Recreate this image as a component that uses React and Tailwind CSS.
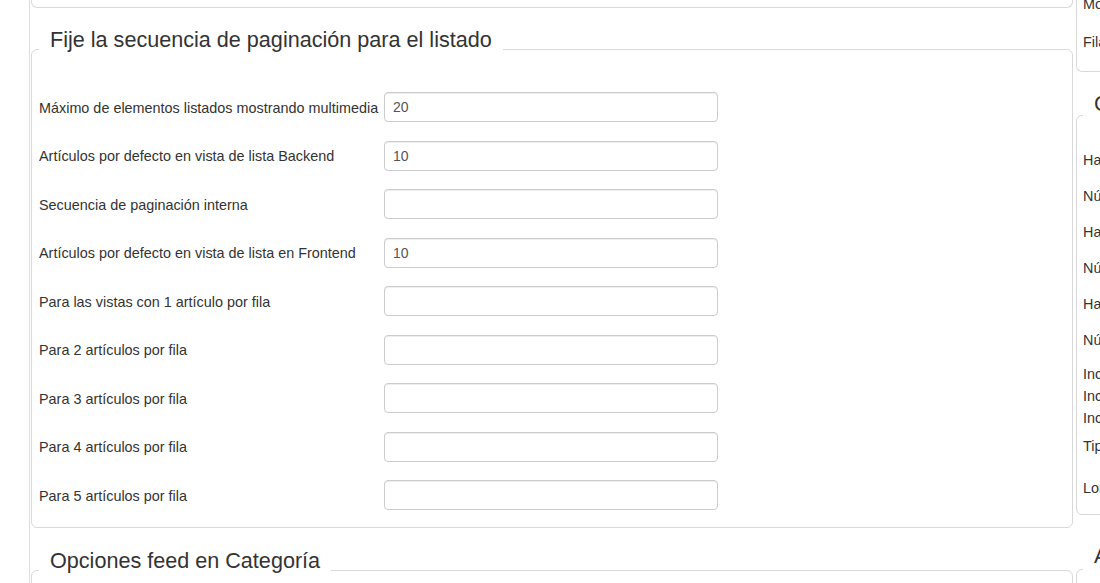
import React from "react";

const leftRows = [
  ["Máximo de elementos listados mostrando multimedia", "20"],
  ["Artículos por defecto en vista de lista Backend", "10"],
  ["Secuencia de paginación interna", ""],
  ["Artículos por defecto en vista de lista en Frontend", "10"],
  ["Para las vistas con 1 artículo por fila", ""],
  ["Para 2 artículos por fila", ""],
  ["Para 3 artículos por fila", ""],
  ["Para 4 artículos por fila", ""],
  ["Para 5 artículos por fila", ""],
];

function Legend({ children, pb = "pb-[19px]" }) {
  return (
    <legend
      className={`px-[11px] ${pb} text-[21.6px] leading-[24px] text-[#333] whitespace-nowrap`}
    >
      {children}
    </legend>
  );
}

function Row({ label, value }) {
  return (
    <div className="flex items-center">
      <div className="w-[345px] shrink-0 pt-[3px] text-[14.4px] text-[#333] whitespace-nowrap">
        {label}
      </div>
      <input
        readOnly
        value={value}
        className="w-[334px] h-[30px] border border-[#ccc] rounded-[4px] px-[8px] text-[14px] text-[#555] bg-white outline-none shadow-[inset_0_1px_1px_rgba(0,0,0,0.075)] font-['Liberation_Sans',sans-serif]"
      />
    </div>
  );
}

function RLabel({ h, mt = "", children }) {
  return (
    <div
      className={`${h} ${mt} shrink-0 flex items-center text-[14.4px] text-[#333] whitespace-nowrap`}
    >
      {children}
    </div>
  );
}

export default function App() {
  return (
    <div className="w-[1100px] h-[583px] overflow-hidden bg-white font-['Liberation_Sans',sans-serif]">
      <div className="flex h-full pl-[29px]">
        <div className="flex gap-[3px] border-l border-[#ddd] pl-[1px] shrink-0">
          {/* Left column */}
          <div className="w-[1042px] shrink-0 flex flex-col">
            <div className="h-[8px] shrink-0 border-x border-b border-[#d9d9d9] rounded-b-[6px]" />
            <fieldset className="mt-[20px] min-w-0 shrink-0 border border-[#d9d9d9] rounded-[6px] px-[7px] pt-[21px] pb-[17px]">
              <Legend>Fije la secuencia de paginación para el listado</Legend>
              <div className="flex flex-col gap-[18.5px]">
                {leftRows.map(([l, v]) => (
                  <Row key={l} label={l} value={v} />
                ))}
              </div>
            </fieldset>
            <fieldset className="mt-[21px] min-w-0 h-[200px] shrink-0 border border-[#d9d9d9] rounded-[6px] px-[7px]">
              <Legend>Opciones feed en Categoría</Legend>
            </fieldset>
          </div>

          {/* Right column */}
          <div className="w-[400px] shrink-0 flex flex-col">
            <div className="h-[72px] shrink-0 border-x border-b border-[#d9d9d9] rounded-b-[6px] flex flex-col justify-end pb-[9px] px-[6px]">
              <RLabel h="h-[38px]">Mostrar subcategorías</RLabel>
              <RLabel h="h-[38px]">Filas de subcategorías</RLabel>
            </div>
            <fieldset className="mt-[20px] min-w-0 shrink-0 border border-[#d9d9d9] rounded-[6px] px-[6px] pt-[5px] pb-[10px]">
              <Legend pb="pb-[22px]">Comentarios</Legend>
              <RLabel h="h-[36px]">Habilitar comentarios</RLabel>
              <RLabel h="h-[36px]">Número de comentarios</RLabel>
              <RLabel h="h-[36px]">Habilitar valoraciones</RLabel>
              <RLabel h="h-[36px]">Número de valoraciones</RLabel>
              <RLabel h="h-[36px]">Habilitar etiquetas</RLabel>
              <RLabel h="h-[36px]">Número de etiquetas</RLabel>
              <RLabel h="h-[22px]" mt="mt-[5px]">Incluir autor</RLabel>
              <RLabel h="h-[22px]">Incluir fecha</RLabel>
              <RLabel h="h-[22px]">Incluir categoría</RLabel>
              <RLabel h="h-[22px]" mt="mt-[6px]">Tipo de orden</RLabel>
              <RLabel h="h-[30px]" mt="mt-[16px]">Longitud del texto</RLabel>
            </fieldset>
            <fieldset className="mt-[29px] min-w-0 h-[200px] shrink-0 border border-[#d9d9d9] rounded-[6px] px-[6px]">
              <Legend pb="pb-[26px]">Avanzado</Legend>
            </fieldset>
          </div>
        </div>
      </div>
    </div>
  );
}
